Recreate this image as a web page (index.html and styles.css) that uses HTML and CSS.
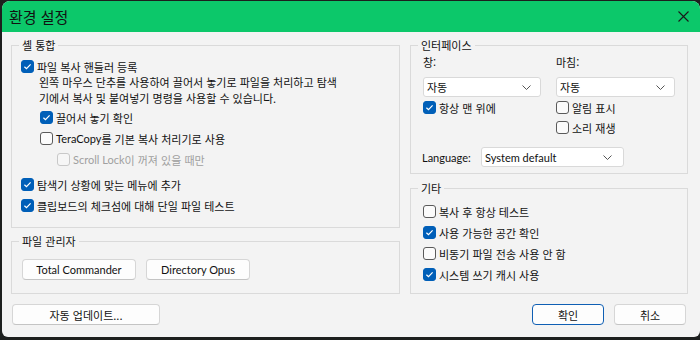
FILE: index.html
```html
<!DOCTYPE html>
<html lang="ko">
<head>
    <meta charset="UTF-8">
    <title>환경 설정</title>
    <link rel="stylesheet" href="styles.css">
</head>
<body>
    <div class="window">
        <div class="titlebar">
            <span class="title">환경 설정</span>
            <svg class="close" width="11" height="11" viewBox="0 0 11 11"><path d="M0.5 0.5 L10.5 10.5 M10.5 0.5 L0.5 10.5" stroke="#1a1a1a" stroke-width="1.1" fill="none"/></svg>
        </div>

        <div class="content">
            <div class="col left">
                <fieldset class="group shell">
                    <legend>셸 통합</legend>
                    <div class="shell-body">
                        <label class="check first"><span class="box on"><svg viewBox="0 0 11 11"><path d="M2.4 5.7 L4.5 7.7 L8.6 3.4" stroke="#fff" stroke-width="1.2" fill="none"/></svg></span>파일 복사 핸들러 등록</label>
                        <p class="desc">왼쪽 마우스 단추를 사용하여 끌어서 놓기로 파일을 처리하고 탐색<br>기에서 복사 및 붙여넣기 명령을 사용할 수 있습니다.</p>
                        <label class="check indent1"><span class="box on"><svg viewBox="0 0 11 11"><path d="M2.4 5.7 L4.5 7.7 L8.6 3.4" stroke="#fff" stroke-width="1.2" fill="none"/></svg></span>끌어서 놓기 확인</label>
                        <label class="check indent1"><span class="box"></span><span class="en">TeraCopy</span>를 기본 복사 처리기로 사용</label>
                        <label class="check indent2 disabled"><span class="box"></span><span class="en">Scroll Lock</span>이 꺼져 있을 때만</label>
                        <label class="check spaced"><span class="box on"><svg viewBox="0 0 11 11"><path d="M2.4 5.7 L4.5 7.7 L8.6 3.4" stroke="#fff" stroke-width="1.2" fill="none"/></svg></span>탐색기 상황에 맞는 메뉴에 추가</label>
                        <label class="check"><span class="box on"><svg viewBox="0 0 11 11"><path d="M2.4 5.7 L4.5 7.7 L8.6 3.4" stroke="#fff" stroke-width="1.2" fill="none"/></svg></span>클립보드의 체크섬에 대해 단일 파일 테스트</label>
                    </div>
                </fieldset>

                <fieldset class="group managers">
                    <legend>파일 관리자</legend>
                    <div class="managers-body">
                        <button class="btn en tc">Total Commander</button>
                        <button class="btn en dopus">Directory Opus</button>
                    </div>
                </fieldset>
            </div>

            <div class="col right">
                <fieldset class="group iface">
                    <legend>인터페이스</legend>
                    <div class="iface-body">
                        <div class="iface-grid">
                            <span class="caption">창:</span>
                            <span class="caption">마침:</span>
                            <div class="combo">자동<svg width="9" height="5" viewBox="0 0 9 5"><path d="M0.5 0.5 L4.5 4.5 L8.5 0.5" stroke="#555" fill="none"/></svg></div>
                            <div class="combo">자동<svg width="9" height="5" viewBox="0 0 9 5"><path d="M0.5 0.5 L4.5 4.5 L8.5 0.5" stroke="#555" fill="none"/></svg></div>
                            <label class="check"><span class="box on"><svg viewBox="0 0 11 11"><path d="M2.4 5.7 L4.5 7.7 L8.6 3.4" stroke="#fff" stroke-width="1.2" fill="none"/></svg></span>항상 맨 위에</label>
                            <label class="check"><span class="box"></span>알림 표시</label>
                            <span></span>
                            <label class="check"><span class="box"></span>소리 재생</label>
                        </div>
                        <div class="lang-row">
                            <span class="lang-label en">Language:</span>
                            <div class="combo lang en">System default<svg width="9" height="5" viewBox="0 0 9 5"><path d="M0.5 0.5 L4.5 4.5 L8.5 0.5" stroke="#555" fill="none"/></svg></div>
                        </div>
                    </div>
                </fieldset>

                <fieldset class="group misc">
                    <legend>기타</legend>
                    <div class="misc-body">
                        <label class="check"><span class="box"></span>복사 후 항상 테스트</label>
                        <label class="check"><span class="box on"><svg viewBox="0 0 11 11"><path d="M2.4 5.7 L4.5 7.7 L8.6 3.4" stroke="#fff" stroke-width="1.2" fill="none"/></svg></span>사용 가능한 공간 확인</label>
                        <label class="check"><span class="box"></span>비동기 파일 전송 사용 안 함</label>
                        <label class="check"><span class="box on"><svg viewBox="0 0 11 11"><path d="M2.4 5.7 L4.5 7.7 L8.6 3.4" stroke="#fff" stroke-width="1.2" fill="none"/></svg></span>시스템 쓰기 캐시 사용</label>
                    </div>
                </fieldset>
            </div>
        </div>

        <div class="footer">
            <button class="btn update">자동 업데이트...</button>
            <div class="actions">
                <button class="btn ok">확인</button>
                <button class="btn cancel">취소</button>
            </div>
        </div>
    </div>
</body>
</html>
```

FILE: styles.css
```css
body {
    margin: 0;
    padding: 1px 0 0 2px;
    width: 700px;
    height: 340px;
    box-sizing: border-box;
    overflow: hidden;
    background-color: #1d1f1e;
    font-family: "Noto Sans CJK KR", sans-serif;
    font-size: 11px;
    color: #111;
}
.window {
    width: 698px;
    height: 336px;
    background-color: #f3f3f3;
    border-radius: 8px 8px 6px 6px;
    overflow: hidden;
}
.titlebar {
    height: 31px;
    background-color: #0cc86a;
    display: flex;
    align-items: center;
    justify-content: space-between;
    padding: 0 11px 0 7px;
}
.title {
    font-size: 15px;
    line-height: 20px;
    color: #111;
}
.en {
    font-family: "Lato", "Noto Sans CJK KR", sans-serif;
    font-size: 11px;
}
.content {
    display: grid;
    grid-template-columns: 389px 278px;
    column-gap: 10px;
    padding: 5px 0 0 9px;
}
.col {
    display: flex;
    flex-direction: column;
}
.col.left {
    gap: 5px;
}
.col.right {
    gap: 6px;
}
.group {
    margin: 0;
    padding: 0;
    border: 1px solid #dadada;
    box-sizing: border-box;
    min-width: 0;
}
.group legend {
    margin-left: 7px;
    padding: 0 3px;
    line-height: 16px;
}
.check {
    display: flex;
    align-items: center;
    height: 21px;
    white-space: nowrap;
}
.box {
    width: 13px;
    height: 13px;
    box-sizing: border-box;
    border: 1px solid #5a5a5a;
    border-radius: 3px;
    background-color: #fbfbfb;
    margin-right: 3px;
    flex: none;
    display: flex;
}
.box svg {
    width: 11px;
    height: 11px;
}
.box.on {
    background-color: #005fb8;
    border-color: #005fb8;
}
.disabled {
    color: #a0a0a0;
}
.disabled .box {
    border-color: #c8c8c8;
    background-color: #f6f6f6;
}

/* shell group */
.shell {
    height: 191px;
}
.shell-body {
    padding: 6px 0 0 9px;
}
.check.first {
    height: 15px;
}
.desc {
    margin: 0 0 1px;
    padding-left: 18px;
    line-height: 16px;
}
.indent1 {
    margin-left: 19px;
}
.indent2 {
    margin-left: 36px;
}
.spaced {
    margin-top: 4px;
}

/* file managers */
.managers {
    height: 61px;
}
.managers-body {
    display: flex;
    gap: 10px;
    padding: 10px 0 0 10px;
}
.btn {
    height: 21px;
    padding: 0;
    font-family: inherit;
    font-size: 11px;
    color: #111;
    background-color: #fdfdfd;
    border: 1px solid #d6d6d6;
    border-bottom-color: #c4c4c4;
    border-radius: 4px;
}
.btn.en {
    font-family: "Lato", "Noto Sans CJK KR", sans-serif;
    font-size: 11px;
}
.btn.tc {
    width: 114px;
}
.btn.dopus {
    width: 104px;
}

/* interface */
.iface {
    height: 137px;
}
.iface-body {
    padding: 1px 12px 0 12px;
}
.iface-grid {
    display: grid;
    grid-template-columns: 118px 119px;
    grid-template-rows: 23px 20px 20px 22px;
    column-gap: 15px;
}
.caption {
    line-height: 16px;
}
.combo {
    height: 20px;
    box-sizing: border-box;
    display: flex;
    align-items: center;
    justify-content: space-between;
    padding: 0 9px 0 3px;
    background-color: #fff;
    border: 1px solid #d9d9d9;
    border-radius: 3px;
}
.lang-row {
    display: flex;
    align-items: center;
    margin-top: 8px;
}
.lang-label {
    width: 59px;
    margin-left: -1px;
}
.combo.lang {
    width: 143px;
    padding-right: 11px;
}

/* misc */
.misc {
    height: 114px;
}
.misc-body {
    padding: 5px 12px 0 12px;
}

/* footer */
.footer {
    display: flex;
    justify-content: space-between;
    padding: 10px 14px 0 10px;
}
.btn.update {
    width: 148px;
}
.actions {
    display: flex;
    gap: 10px;
}
.btn.ok {
    width: 72px;
    border-color: #0f5fb4;
}
.btn.cancel {
    width: 72px;
}
```
